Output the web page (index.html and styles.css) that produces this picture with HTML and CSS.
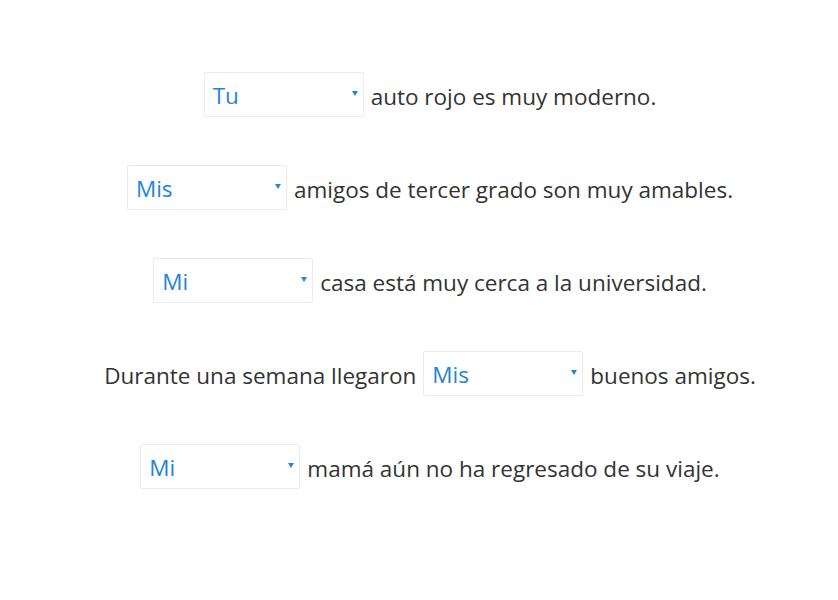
FILE: index.html
```html
<!DOCTYPE html>
<html lang="es">
<head>
<meta charset="utf-8">
<link rel="stylesheet" href="styles.css">
</head>
<body>
<div class="quiz">
  <div class="row"><span class="pick"><span class="val">Tu</span><span class="caret"></span></span><span class="txt">auto rojo es muy moderno.</span></div>
  <div class="row"><span class="pick"><span class="val">Mis</span><span class="caret"></span></span><span class="txt">amigos de tercer grado son muy amables.</span></div>
  <div class="row"><span class="pick"><span class="val">Mi</span><span class="caret"></span></span><span class="txt">casa está muy cerca a la universidad.</span></div>
  <div class="row"><span class="txt lead">Durante una semana llegaron</span><span class="pick"><span class="val">Mis</span><span class="caret"></span></span><span class="txt">buenos amigos.</span></div>
  <div class="row"><span class="pick"><span class="val">Mi</span><span class="caret"></span></span><span class="txt">mamá aún no ha regresado de su viaje.</span></div>
</div>
</body>
</html>
```
FILE: styles.css
```css
html, body {
  margin: 0;
  padding: 0;
  background: #fff;
}
body {
  font-family: "Open Sans", "Noto Sans", sans-serif;
  color: #333;
  font-size: 22.5px;
}
.quiz {
  padding: 72px 0 0 22px;
  display: flex;
  flex-direction: column;
  align-items: center;
  gap: 48px;
}
.row {
  display: flex;
  align-items: center;
  height: 45px;
}
.pick {
  box-sizing: border-box;
  width: 160px;
  height: 45px;
  border: 1px solid #ebebeb;
  border-radius: 2px;
  display: flex;
  align-items: center;
  justify-content: space-between;
  padding: 0 5px 0 8px;
  color: #2385d6;
}
.val {
  font-size: 22.5px;
  line-height: 1;
  padding-top: 4px;
}
.caret {
  width: 0;
  height: 0;
  border-left: 3px solid transparent;
  border-right: 3px solid transparent;
  border-top: 5px solid #2385d6;
  margin-top: -2px;
}
.txt {
  margin-left: 7px;
  white-space: nowrap;
  padding-top: 4px;
}
.txt.lead {
  margin-left: 0;
  margin-right: 7px;
}
```
